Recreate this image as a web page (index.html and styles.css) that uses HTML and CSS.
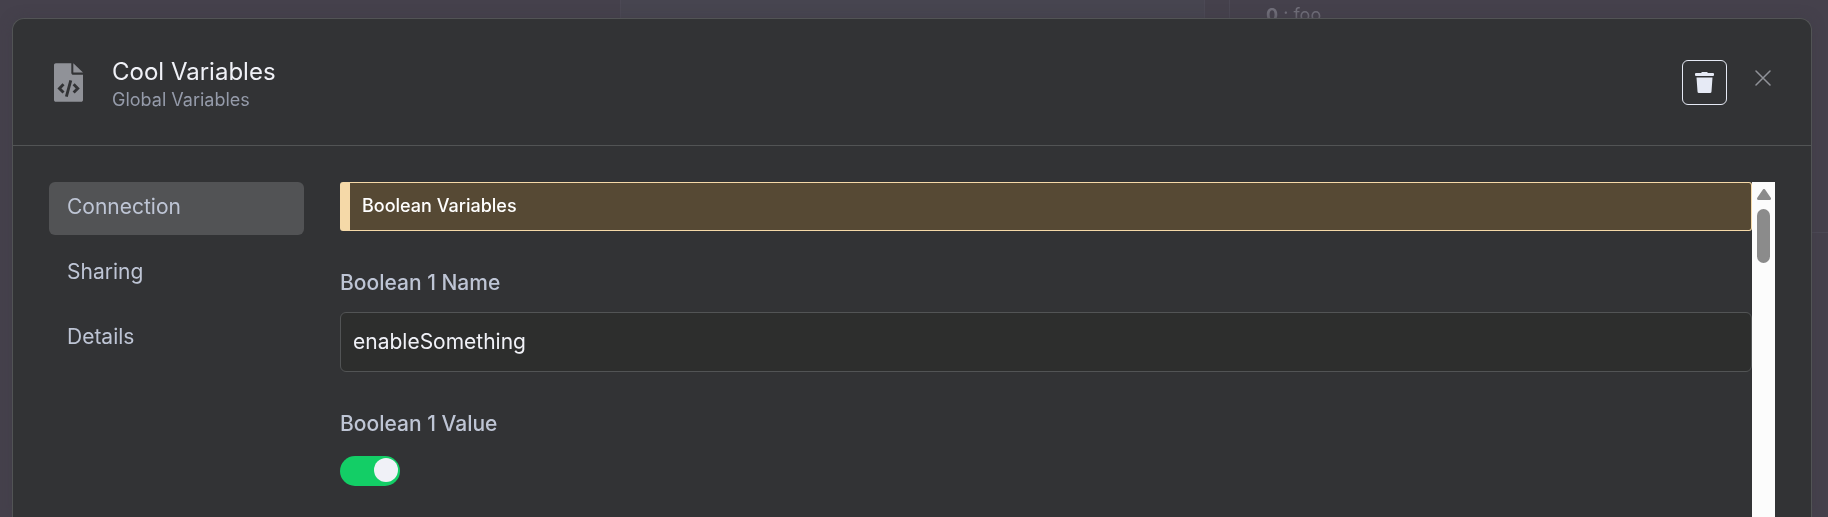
FILE: index.html
```
<!DOCTYPE html>
<html lang="en">
<head>
<meta charset="utf-8">
<meta name="viewport" content="width=device-width, initial-scale=1">
<title>Cool Variables</title>
<link rel="stylesheet" href="styles.css">
</head>
<body>
<div class="backdrop" aria-hidden="true">
  <div class="backdrop-side"></div>
  <div class="backdrop-main"></div>
  <div class="backdrop-output"><p class="backdrop-item"><b>0</b> : foo</p></div>
</div>
<div class="overlay">
  <main class="dialog" role="dialog" aria-labelledby="dialog-title">
    <header class="dialog-header">
      <svg class="file-icon" viewBox="0 0 384 512" aria-hidden="true">
        <path fill="currentColor" d="M24 0h205v128c0 15 11 27 27 27h128v333c0 13-11 24-24 24H24c-13 0-24-11-24-24V24C0 11 11 0 24 0z"/>
        <path fill="currentColor" d="M256 0v122h128z"/>
        <path class="file-icon-code" d="M126 280l-54 54 54 54M260 280l54 54-54 54M222 228l-58 216"/>
      </svg>
      <div class="heading">
        <h1 class="title" id="dialog-title">Cool Variables</h1>
        <p class="subtitle">Global Variables</p>
      </div>
      <div class="actions">
        <button class="delete-button" type="button" aria-label="Delete">
          <svg class="trash-icon" viewBox="0 0 19 21" aria-hidden="true">
            <path fill="currentColor" d="M7 0h5l1 1h5q1 0 1 1v1q0 1-1 1H1q-1 0-1-1V2q0-1 1-1h5zM1.500 5.500h16l-1 14q0 1.500-1.500 1.500H4q-1.500 0-1.500-1.500z"/>
          </svg>
        </button>
        <button class="close-button" type="button" aria-label="Close">
          <svg class="close-icon" viewBox="0 0 16 16" aria-hidden="true"><path d="M1 1l14 14M15 1L1 15"/></svg>
        </button>
      </div>
    </header>
    <div class="dialog-body">
      <nav class="menu">
        <a class="menu-item menu-item-active" href="#connection" aria-current="page">Connection</a>
        <a class="menu-item" href="#sharing">Sharing</a>
        <a class="menu-item" href="#details">Details</a>
      </nav>
      <form class="settings">
        <p class="notice">Boolean Variables</p>
        <div class="field">
          <label class="label" for="bool-name">Boolean 1 Name</label>
          <input class="text-input" id="bool-name" type="text" value="enableSomething">
        </div>
        <div class="field">
          <label class="label" for="bool-value">Boolean 1 Value</label>
          <input class="switch" id="bool-value" type="checkbox" role="switch" checked>
        </div>
      </form>
      <div class="scrollbar" aria-hidden="true">
        <svg class="scroll-arrow" viewBox="0 0 14 11"><path d="M7 1.500L12.500 9.500H1.500z"/></svg>
        <div class="scroll-thumb"></div>
      </div>
    </div>
  </main>
</div>
</body>
</html>
```
FILE: styles.css
```
* {
  box-sizing: border-box;
}

body {
  margin: 0;
  height: 100vh;
  overflow: hidden;
  background: #45414c;
  font-family: Inter, "Liberation Sans", sans-serif;
}

h1,
p {
  margin: 0;
}

button {
  padding: 0;
  background: none;
  cursor: pointer;
}

.backdrop {
  position: fixed;
  inset: 0;
  display: grid;
  grid-template-columns: 620fr 585fr 623fr;
}

.backdrop-main {
  border: 1px solid #4c4955;
  border-width: 0 1px;
  background: #474550;
}

.backdrop-output {
  height: 233px;
  margin-left: 24px;
  padding: 4px 36px;
  border-left: 1px solid #4c4955;
  border-bottom: 1px solid #4c4955;
}

.backdrop-item {
  color: #72707b;
  font-size: 18px;
  line-height: 22px;
}

.overlay {
  position: fixed;
  inset: 0;
  display: flex;
  padding: 18px 16px 0 12px;
}

.dialog {
  flex: 1;
  display: flex;
  flex-direction: column;
  border: 1px solid #525455;
  border-bottom: 0;
  border-radius: 12px 12px 0 0;
  background: #323335;
  box-shadow: 0 0 12px #403c4699;
}

.dialog-header {
  display: flex;
  align-items: flex-start;
  height: 127px;
  padding: 36px 36px 0 41px;
  border-bottom: 1px solid #525455;
}

.file-icon {
  width: 29px;
  height: 39px;
  margin-top: 8px;
  color: #909298;
}

.file-icon-code {
  fill: none;
  stroke: #323335;
  stroke-width: 38px;
}

.heading {
  margin-left: 29px;
  padding-top: 1px;
}

.title {
  color: #f0f1f7;
  font-size: 24px;
  font-weight: 400;
  line-height: 32px;
}

.subtitle {
  color: #959baa;
  font-size: 18px;
  line-height: 24px;
}

.actions {
  display: flex;
  align-items: flex-start;
  gap: 24px;
  margin-left: auto;
  padding-top: 5px;
}

.delete-button {
  display: grid;
  place-items: center;
  width: 45px;
  height: 45px;
  border: 1px solid #e6eaf5;
  border-radius: 6px;
  color: #e6eaf5;
}

.trash-icon {
  width: 19px;
  height: 21px;
}

.close-button {
  display: grid;
  place-items: center;
  width: 24px;
  height: 36px;
  border: 0;
}

.close-icon {
  width: 16px;
  height: 16px;
  fill: none;
  stroke: #909298;
  stroke-width: 1.5;
  stroke-linecap: round;
}

.dialog-body {
  flex: 1;
  display: flex;
  min-height: 0;
  padding: 36px 36px 0;
}

.menu {
  display: flex;
  flex-direction: column;
  gap: 12px;
  width: 255px;
  margin-right: 36px;
}

.menu-item {
  padding: 13px 18px 16px;
  border-radius: 6px;
  color: #bec5d5;
  font-size: 21px;
  line-height: 24px;
  text-decoration: none;
}

.menu-item-active {
  background: #525355;
}

.settings {
  flex: 1;
  display: flex;
  flex-direction: column;
  gap: 36px;
}

.notice {
  padding: 11px 12px 13px;
  border: 1px solid #f5d9a8;
  border-left-width: 10px;
  border-radius: 3px;
  background: #564934;
  color: #ffffff;
  font-size: 18px;
  font-weight: 500;
  line-height: 23px;
}

.field {
  display: flex;
  flex-direction: column;
  align-items: flex-start;
}

.label {
  margin-bottom: 14px;
  color: #bec5d5;
  font-size: 21px;
  font-weight: 500;
  line-height: 31px;
}

.text-input {
  width: 100%;
  height: 60px;
  padding: 0 12px 2px;
  border: 1px solid #525455;
  border-radius: 6px;
  background: #2d2e2d;
  color: #f0f1f7;
  font: 21px Inter, "Liberation Sans", sans-serif;
}

.switch {
  appearance: none;
  width: 60px;
  height: 30px;
  margin: 3px 0 0;
  padding: 2px;
  border-radius: 15px;
  background: #525455;
}

.switch::before {
  content: "";
  display: block;
  width: 24px;
  height: 24px;
  border-radius: 50%;
  background: #f0f1f7;
}

.switch:checked {
  background: #13ce66;
}

.switch:checked::before {
  margin-left: auto;
}

.scrollbar {
  display: flex;
  flex-direction: column;
  align-items: center;
  gap: 9px;
  width: 23px;
  padding-top: 7px;
  background: #fcfcfc;
}

.scroll-arrow {
  width: 14px;
  height: 11px;
  fill: #8b8b8b;
  stroke: #8b8b8b;
  stroke-width: 3px;
  stroke-linejoin: round;
}

.scroll-thumb {
  width: 13px;
  height: 54px;
  border-radius: 7px;
  background: #8b8b8b;
}
```
